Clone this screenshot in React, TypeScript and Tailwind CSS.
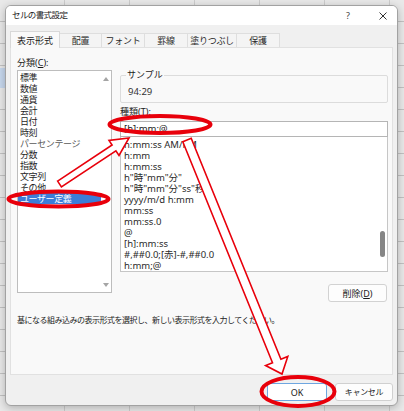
import React from "react";

const leftItems = [
  "標準",
  "数値",
  "通貨",
  "会計",
  "日付",
  "時刻",
  "パーセンテージ",
  "分数",
  "指数",
  "文字列",
  "その他",
  "ユーザー定義",
];

const typeItems = [
  "h:mm:ss AM/PM",
  "h:mm",
  "h:mm:ss",
  'h"時"mm"分"',
  'h"時"mm"分"ss"秒"',
  "yyyy/m/d h:mm",
  "mm:ss",
  "mm:ss.0",
  "@",
  "[h]:mm:ss",
  "#,##0.0;[赤]-#,##0.0",
  "h:mm;@",
];

const tabs = ["配置", "フォント", "罫線", "塗りつぶし", "保護"];
const tabW = ["w-[42px]", "w-[43px]", "w-[43px]", "w-[49px]", "w-[43px]"];

export default function App() {
  return (
    <div className="relative w-[404px] h-[411px] overflow-hidden bg-[#e9e9e9] bg-[repeating-linear-gradient(to_bottom,transparent_0px,transparent_21px,#c2c2c2_21px,#c2c2c2_22px),repeating-linear-gradient(to_right,transparent_0px,transparent_64px,#cdcdcd_64px,#cdcdcd_65px)] pt-[5px] pl-[5px] font-['Noto_Sans','Noto_Sans_CJK_JP',sans-serif] text-[#1b1b1b]">
      {/* selected cell of the sheet behind */}
      <div className="absolute left-0 top-[68px] w-[6px] h-[20px] bg-[#c7d8ee]" />

      {/* dialog */}
      <div className="relative z-10 w-[393px] h-[401px] rounded-[6px] border border-[#a2a2a2] bg-[#f0f0f0] shadow-[0_2px_8px_rgba(0,0,0,0.25)] flex flex-col overflow-hidden">
        {/* title bar */}
        <div className="h-[19px] bg-white flex items-center pl-[6px] pr-[4px]">
          <span className="text-[8.5px] tracking-[-0.6px] leading-none text-[#222]">セルの書式設定</span>
          <div className="ml-auto flex items-center">
            <span className="w-[20px] text-center text-[9px] leading-none text-[#444]">?</span>
            <span className="ml-[15px] w-[20px] h-[19px] flex items-center justify-center">
              <svg width="8" height="8" viewBox="0 0 8 8">
                <path d="M0.5 0.5 L7.5 7.5 M7.5 0.5 L0.5 7.5" stroke="#333" strokeWidth="1" fill="none" />
              </svg>
            </span>
          </div>
        </div>

        {/* tabs */}
        <div className="h-[22px] flex items-end pl-[4px]">
          <div className="relative z-10 -mb-px h-[17px] w-[50px] border border-b-0 border-[#d8d8d8] bg-[#f9f9f9] flex items-center justify-center text-[9px] leading-none">
            表示形式
          </div>
          {tabs.map((t, i) => (
            <div
              key={t}
              className={`${tabW[i]} h-[14px] border border-b-0 border-l-0 border-[#dedede] bg-[#f4f4f4] flex items-center justify-center text-[9px] tracking-[-0.3px] leading-none text-[#2a2a2a]`}
            >
              {t}
            </div>
          ))}
        </div>

        {/* panel */}
        <div className="mx-[4px] h-[328px] border border-[#e1e1e1] bg-[#f9f9f9] pt-[8px] pl-[6px] flex flex-col">
          <div className="flex">
            {/* category column */}
            <div className="w-[95px] flex flex-col">
              <div className="h-[14px] leading-[14px] text-[9px]">
                分類(<span className="underline">C</span>):
              </div>
              <div className="h-[223px] border border-[#bdbdbd] bg-white flex">
                <div className="flex-1 pt-[1px] flex flex-col">
                  {leftItems.map((it, i) => (
                    <div
                      key={it}
                      className={`h-[11px] leading-[11px] pl-[2px] text-[9px] tracking-[-0.4px] whitespace-nowrap ${
                        i === 11
                          ? "bg-[#3b7dd8] text-white"
                          : i === 6
                          ? "text-[#5a5a5a]"
                          : "text-[#1e1e1e]"
                      }`}
                    >
                      {it}
                    </div>
                  ))}
                </div>
                <div className="w-[10px] flex flex-col items-center justify-between pt-[6px] pb-[5px]">
                  <svg width="6" height="4" viewBox="0 0 6 4">
                    <path d="M0 4 L3 0 L6 4 Z" fill="#a5a5a5" />
                  </svg>
                  <svg width="6" height="4" viewBox="0 0 6 4">
                    <path d="M0 0 L6 0 L3 4 Z" fill="#a5a5a5" />
                  </svg>
                </div>
              </div>
            </div>

            {/* right column */}
            <div className="ml-[8px] w-[268px] flex flex-col">
              <div className="relative mt-[19px] h-[28px] border border-[#dcdcdc] rounded-[2px] pt-[10px] pl-[7px]">
                <span className="absolute -top-[7px] left-[5px] bg-[#f9f9f9] px-[1px] text-[9px] leading-[12px]">
                  サンプル
                </span>
                <div className="text-[9.5px] leading-[12px] text-[#333]">94:29</div>
              </div>
              <div className="mt-[2px] h-[14px] leading-[14px] text-[9px]">
                種類(<span className="underline">T</span>):
              </div>
              <div className="mt-[2px] h-[16px] border border-[#b5b5b5] bg-white pl-[3px] text-[9.5px] leading-[14px]">
                [h]:mm;@
              </div>
              <div className="h-[135px] border border-t-0 border-[#c6c6c6] bg-white flex">
                <div className="flex-1 pt-[2px] flex flex-col">
                  {typeItems.map((it) => (
                    <div key={it} className="h-[11px] leading-[11px] pl-[3px] text-[9.5px] whitespace-nowrap text-[#2a2a2a]">
                      {it}
                    </div>
                  ))}
                </div>
                <div className="w-[10px] flex flex-col items-center">
                  <div className="mt-[94px] h-[26px] w-[5px] rounded-full bg-[#858585]" />
                </div>
              </div>
              <div className="mt-[12px] flex justify-end pr-[1px]">
                <div className="w-[59px] h-[18px] rounded-[3px] border border-[#d2d2d2] bg-[#fdfdfd] flex items-center justify-center text-[9px] leading-none">
                  削除(<span className="underline">D</span>)
                </div>
              </div>
            </div>
          </div>

          <div className="mt-[12px] h-[12px] leading-[12px] text-[8px] tracking-[-0.5px] whitespace-nowrap text-[#222]">
            基になる組み込みの表示形式を選択し、新しい表示形式を入力してください。
          </div>
        </div>

        {/* bottom buttons */}
        <div className="flex-1 flex justify-end items-start pt-[8px] pr-[4px] gap-[8px]">
          <div className="w-[60px] h-[18px] rounded-[3px] border border-[#6ea6e0] bg-white flex items-center justify-center text-[9px] leading-none">
            OK
          </div>
          <div className="w-[58px] h-[18px] rounded-[3px] border border-[#d0d0d0] bg-[#fdfdfd] flex items-center justify-center text-[8px] tracking-[-0.3px] leading-none">
            キャンセル
          </div>
        </div>
      </div>

      {/* red annotations */}
      <svg
        className="absolute left-0 top-0 z-20 pointer-events-none"
        width="404"
        height="411"
        viewBox="0 0 404 411"
      >
        <polygon
          points="57.6,181.1 112.1,145.0 109.0,140.4 129,138 119.0,155.4 115.9,150.8 61.4,186.9"
          fill="white"
          stroke="#e8000b"
          strokeWidth="1.6"
          strokeLinejoin="miter"
        />
        <polygon
          points="182.8,141.7 191.2,138.3 280.9,359.3 287.8,356.5 282,374 265.6,365.5 272.5,362.7"
          fill="white"
          stroke="#e8000b"
          strokeWidth="1.6"
          strokeLinejoin="miter"
        />
        <ellipse cx="160" cy="124.5" rx="50.5" ry="8.5" fill="none" stroke="#e8000b" strokeWidth="4" />
        <ellipse cx="58.5" cy="199" rx="50" ry="7.5" fill="none" stroke="#e8000b" strokeWidth="4" />
        <ellipse cx="298" cy="391.5" rx="36.5" ry="14.5" fill="none" stroke="#e8000b" strokeWidth="4" />
      </svg>
    </div>
  );
}
